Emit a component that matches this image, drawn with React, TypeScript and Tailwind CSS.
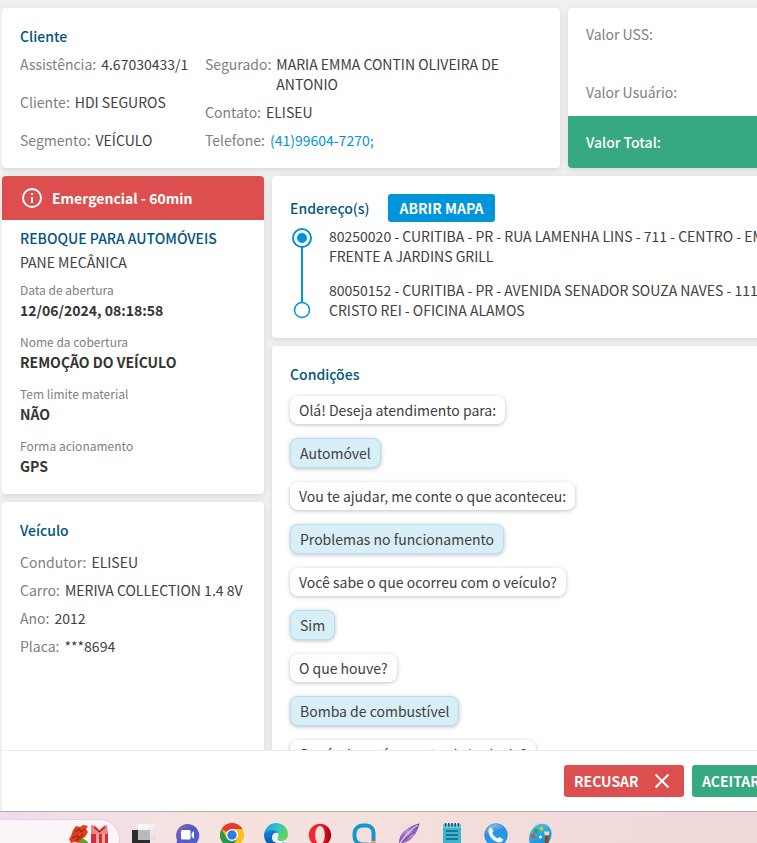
import type { ReactNode } from 'react';

const messages = [
  { text: 'Olá! Deseja atendimento para:', answer: false },
  { text: 'Automóvel', answer: true },
  { text: 'Vou te ajudar, me conte o que aconteceu:', answer: false },
  { text: 'Problemas no funcionamento', answer: true },
  { text: 'Você sabe o que ocorreu com o veículo?', answer: false },
  { text: 'Sim', answer: true },
  { text: 'O que houve?', answer: false },
  { text: 'Bomba de combustível', answer: true },
  { text: 'O veículo está em estrada/rodovia?', answer: false },
];

const serviceDetails = [
  { label: 'Data de abertura', value: '12/06/2024, 08:18:58' },
  { label: 'Nome da cobertura', value: 'REMOÇÃO DO VEÍCULO' },
  { label: 'Tem limite material', value: 'NÃO' },
  { label: 'Forma acionamento', value: 'GPS' },
];

const vehicle = [
  { label: 'Condutor:', value: 'ELISEU' },
  { label: 'Carro:', value: 'MERIVA COLLECTION 1.4 8V' },
  { label: 'Ano:', value: '2012' },
  { label: 'Placa:', value: '***8694' },
];

const Card = ({ className = '', children }: { className?: string; children: ReactNode }) => (
  <section className={`overflow-hidden rounded bg-white shadow-[0_2px_6px_rgba(0,0,0,0.1)] ${className}`}>{children}</section>
);

const Title = ({ children }: { children: ReactNode }) => (
  <h2 className="font-medium text-[#005580]">{children}</h2>
);

const Field = ({ label, children }: { label: string; children: ReactNode }) => (
  <div className="flex gap-[5px]">
    <span className="shrink-0 text-[#808080]">{label}</span>
    <span>{children}</span>
  </div>
);

/* Taskbar icons, all on a 24x24 grid */
const TaskView = () => (
  <svg className="size-6" viewBox="0 0 24 24">
    <defs>
      <linearGradient id="tv" x2="1" y2="1"><stop stopColor="#fff" /><stop offset="1" stopColor="#ddd" /></linearGradient>
    </defs>
    <path d="M0 7h18v17H0z" fill="#2b2d2c" />
    <path d="M6 1h18v16H6z" fill="url(#tv)" />
    <path d="M6 7h12v10H6z" fill="#b9bab9" />
  </svg>
);

const VideoChat = () => (
  <svg className="size-6" viewBox="0 0 24 24">
    <defs>
      <linearGradient id="vc" x2="1" y2="1"><stop stopColor="#7b6fc8" /><stop offset="0.45" stopColor="#5458c4" /><stop offset="1" stopColor="#4f63d8" /></linearGradient>
    </defs>
    <path d="M12 1a11.500 11.500 0 1 1-8 20l-4 3 1-7A11.500 11.500 0 0 1 12 1z" fill="url(#vc)" />
    <rect x="5" y="7" width="9.5" height="9.5" rx="1.3" fill="#fff" />
    <path d="M15.600 10.200 18 8v8l-2.400-2.400z" fill="#fff" />
  </svg>
);

const Chrome = () => (
  <svg className="size-6" viewBox="0 0 24 24">
    <circle cx="12" cy="12" r="12" fill="#fbc116" />
    <path d="M12 12 1.600 6A12 12 0 0 1 22.400 6z" fill="#e33b2e" />
    <path d="M1.600 6A12 12 0 0 0 12 24l5.200-9-10.400 0z" fill="#269a48" />
    <path d="M12 6h10.400L17.200 15z" fill="#fbc116" />
    <circle cx="12" cy="12" r="6" fill="#fff" />
    <circle cx="12" cy="12" r="4.7" fill="#2f7ded" />
  </svg>
);

const Edge = () => (
  <svg className="size-6" viewBox="0 0 24 24">
    <defs>
      <linearGradient id="eg" x2="1" y2="0.5"><stop stopColor="#1c9bdc" /><stop offset="0.5" stopColor="#2bc3cf" /><stop offset="1" stopColor="#62d65a" /></linearGradient>
      <linearGradient id="eb" x2="0" y2="1"><stop stopColor="#1585d6" /><stop offset="1" stopColor="#0a4fa0" /></linearGradient>
    </defs>
    <path d="M0 10C2 4 6 0 12 0c7 0 12 5 12 11 0 5-3 7-7 7-3 0-4-1-3-3 1-4-1-7-6-7C5 8 1 10 0 10z" fill="url(#eg)" />
    <path d="M0 11c2-3 5-4 8-4 3 0 5 1 6 3-4-1-6 1-6 5 0 4 5 7 13 3-2 4-6 6-10 6C5 24-.5 18 0 11z" fill="url(#eb)" />
    <path d="M14.500 10.500C11 9 8.500 11 8.500 14c0 4 4 7 9 6 2 0 4-1 5-2.500-3 1-5 1-7 .5-2-1-3-2-2-4 .5-1 1-2 1-3.500z" fill="#e9f1f8" />
  </svg>
);

const Opera = () => (
  <svg className="size-6" viewBox="0 0 24 24">
    <defs>
      <linearGradient id="op" x2="1"><stop stopColor="#ff2638" /><stop offset="0.55" stopColor="#e5202c" /><stop offset="1" stopColor="#a70014" /></linearGradient>
    </defs>
    <path fillRule="evenodd" d="M12 .8c6.300 0 11.200 5 11.200 11.300S18.300 23.400 12 23.400.8 18.400.8 12.100 5.700.8 12 .8zM12 3c-3 0-4.800 4-4.800 9.100s1.800 9.100 4.800 9.100 4.800-4 4.800-9.100S15 3 12 3z" fill="url(#op)" />
  </svg>
);

const LetterRing = () => (
  <svg className="size-6" viewBox="0 0 24 24">
    <path d="M21.500 18V9.500a7 7 0 0 0-7-7h-4a8 8 0 0 0-8 8v3a8 8 0 0 0 8 8h6" fill="none" stroke="#1397cf" strokeWidth="4" />
    <path d="M18.500 18.500H24V24h-5.500z" fill="#f58a3c" />
  </svg>
);

const Feather = () => (
  <svg className="size-6" viewBox="0 0 24 24">
    <defs>
      <linearGradient id="fe" x1="1" x2="0" y2="1"><stop stopColor="#5b2a94" /><stop offset="0.5" stopColor="#b48ed6" /><stop offset="1" stopColor="#7441a8" /></linearGradient>
    </defs>
    <path d="M23.500.5C16 2 8 7 5 12c-1.500 3-2 5-2 8 6 0 11-2 14-6 3-3 5-8 6.500-13.500z" fill="url(#fe)" />
    <path d="M22 2C15 6 9 12 2 23" fill="none" stroke="#e3d0f2" strokeWidth="1.2" />
    <path d="M19 9c-4 2-7 4-10 8" fill="none" stroke="#68369e" strokeWidth="1" />
  </svg>
);

const Notepad = () => (
  <svg className="size-6" viewBox="0 0 24 24">
    <path d="M3 1.500h18V24H3z" fill="#3db5d0" />
    <path d="M3 1.500h18V5H3z" fill="#63cbe0" />
    <path d="M5.500 0v3.500M8.750 0v3.500M12 0v3.500M15.250 0v3.500M18.500 0v3.500" stroke="#234d5d" strokeWidth="1.5" />
    <path d="M6 8h12M6 12h12M6 16h12" stroke="#155f7c" strokeWidth="1.5" />
  </svg>
);

const Phone = () => (
  <svg className="size-6" viewBox="0 0 24 24">
    <defs>
      <linearGradient id="ph" x2="0.3" y2="1"><stop stopColor="#a9dbf6" /><stop offset="0.45" stopColor="#2b8fe0" /><stop offset="1" stopColor="#1fa4ec" /></linearGradient>
    </defs>
    <circle cx="12" cy="12" r="11.3" fill="url(#ph)" stroke="#2a76bd" strokeWidth="0.7" />
    <path d="M7 4.500 9.500 8 8.300 10c.8 2.300 2.500 4.200 5.200 5.400l2.200-1.300 3.500 2.300c-.7 2.300-2.700 3.400-5 2.800C9 18 5 13.300 4.500 8.500 4.400 6.500 5.300 5 7 4.500z" fill="#fff" />
  </svg>
);

const Paint = () => (
  <svg className="size-6" viewBox="0 0 24 24">
    <defs>
      <linearGradient id="pa" x2="0.5" y2="1"><stop stopColor="#42cbf1" /><stop offset="1" stopColor="#118bd4" /></linearGradient>
    </defs>
    <path d="M14 .8c6 0 9.500 4.500 9.500 10C23.500 18 18 24 11 24c-5 0-10-2-10-8C1 8 7 .8 14 .8z" fill="url(#pa)" />
    <circle cx="5" cy="13" r="2.3" fill="#d65532" />
    <circle cx="8" cy="8" r="2.2" fill="#3c9b3f" />
    <circle cx="13.5" cy="5.8" r="2" fill="#f7b91a" />
    <circle cx="12.5" cy="14" r="1.6" fill="#eaf7fd" />
    <path d="M16 8.500h5.500l-.8 4h-3.900z" fill="#f5d9b2" />
    <path d="M17 12.500h3.500V24H17z" fill="#8a4b17" />
  </svg>
);

const Bouquet = () => (
  <svg className="h-6 w-10" viewBox="0 0 40 24">
    <path d="M10 15c4-1 6 0 9 3l2 6H11z" fill="#5aa42c" />
    <path d="M4 6 7 2l4 1 3-2 5 1-2 3 2 3-3 5-4 3-2 3-4-1-4 1-2-4 2-3z" fill="#d9431e" />
    <path d="m6 8 4-3 2 3 4-3M3 14l5-2 3 2 3-4M7 17l3-3" fill="none" stroke="#a12308" strokeWidth="1.2" />
    <path d="M22 8h17v16H22z" fill="#cf3138" />
    <path d="M27 8h3v16h-3zM33 8h3v16h-3z" fill="#f2a59a" />
    <path d="M22 1c4 0 7 2 8.500 5C32 3 35 1 38 1l1 9H22z" fill="#e98a80" />
    <path d="m25 3 5.500 5L36 3" fill="none" stroke="#8e1d28" strokeWidth="1.2" />
  </svg>
);

const taskbarIcons = [TaskView, VideoChat, Chrome, Edge, Opera, LetterRing, Feather, Notepad, Phone, Paint];

const App = () => {
  return (
    <div className="flex h-screen flex-col overflow-hidden bg-[#f0f0f0] font-['Noto_Sans_CJK_SC',sans-serif] text-sm leading-5 text-[#404040]">
      <div className="flex min-h-0 min-w-[820px] flex-1 flex-col pl-0.5">
        <main className="flex min-h-0 flex-1 flex-col gap-2 overflow-hidden pt-2 pr-2">
          <div className="grid shrink-0 grid-cols-[558px_minmax(0,1fr)] gap-2">
            <Card className="px-[18px] pt-[18px] pb-[18px]">
              <Title>Cliente</Title>
              <div className="mt-2 flex">
                <div className="flex w-[185px] shrink-0 flex-col justify-between">
                  <Field label="Assistência:">4.67030433/1</Field>
                  <Field label="Cliente:">HDI SEGUROS</Field>
                  <Field label="Segmento:">VEÍCULO</Field>
                </div>
                <div className="flex w-[320px] flex-col gap-2">
                  <Field label="Segurado:">MARIA EMMA CONTIN OLIVEIRA DE ANTONIO</Field>
                  <Field label="Contato:">ELISEU</Field>
                  <Field label="Telefone:">
                    <a href="tel:41996047270" className="text-[#0095da]">(41)99604-7270;</a>
                  </Field>
                </div>
              </div>
            </Card>

            <Card className="flex flex-col">
              <div className="flex flex-1 flex-col justify-between px-[18px] pt-4 pb-3.5 text-[#808080]">
                <p>Valor USS:</p>
                <p>Valor Usuário:</p>
              </div>
              <p className="bg-[#36a980] px-[18px] py-4 font-medium text-white">Valor Total:</p>
            </Card>
          </div>

          <div className="grid min-h-0 flex-1 grid-cols-[262px_minmax(0,1fr)] gap-2">
            <div className="flex flex-col gap-2">
              <Card className="shrink-0">
                <div className="flex h-11 items-center gap-2 bg-[#dc4f4e] px-[18px] font-bold text-white">
                  <svg className="size-6" viewBox="0 0 24 24" fill="none" stroke="#fff" strokeWidth="2">
                    <circle cx="12" cy="12" r="9" />
                    <path d="M12 7v2M12 11v6" />
                  </svg>
                  Emergencial - 60min
                </div>
                <div className="px-[18px] pt-2 pb-[18px]">
                  <Title>REBOQUE PARA AUTOMÓVEIS</Title>
                  <p className="mt-1">PANE MECÂNICA</p>
                  <dl className="mt-2 flex flex-col gap-3">
                    {serviceDetails.map((item) => (
                      <div key={item.label}>
                        <dt className="text-xs leading-5 text-[#808080]">{item.label}</dt>
                        <dd className="font-bold text-[#333333]">{item.value}</dd>
                      </div>
                    ))}
                  </dl>
                </div>
              </Card>

              <Card className="flex-1 rounded-b-none px-[18px] pt-[18px]">
                <Title>Veículo</Title>
                <div className="mt-3 flex flex-col gap-2">
                  {vehicle.map((item) => (
                    <Field key={item.label} label={item.label}>{item.value}</Field>
                  ))}
                </div>
              </Card>
            </div>

            <div className="flex min-h-0 flex-col gap-2">
              <Card className="shrink-0 px-[18px] py-[18px]">
                <div className="flex items-center gap-[18px]">
                  <Title>Endereço(s)</Title>
                  <button className="h-7 rounded-[3px] bg-[#0095da] px-3 font-bold text-white">ABRIR MAPA</button>
                </div>
                <div className="mt-1 flex gap-[15px]">
                  <svg className="h-[94px] w-6 shrink-0" viewBox="0 0 24 94" fill="none" stroke="#0095da" strokeWidth="2">
                    <path d="M12 21v55" />
                    <circle cx="12" cy="12" r="9" />
                    <circle cx="12" cy="12" r="5" fill="#0095da" stroke="none" />
                    <circle cx="12" cy="84" r="7.5" strokeWidth="1.5" />
                  </svg>
                  <div className="flex flex-col gap-3.5 whitespace-nowrap">
                    <p>80250020 - CURITIBA - PR - RUA LAMENHA LINS - 711 - CENTRO - EM<br />FRENTE A JARDINS GRILL</p>
                    <p>80050152 - CURITIBA - PR - AVENIDA SENADOR SOUZA NAVES - 1115 -<br />CRISTO REI - OFICINA ALAMOS</p>
                  </div>
                </div>
              </Card>

              <Card className="min-h-0 flex-1 rounded-b-none px-[18px] pt-[18px]">
                <Title>Condições</Title>
                <div className="mt-3 flex flex-col items-start gap-3.5">
                  {messages.map((msg) => (
                    <p
                      key={msg.text}
                      className={
                        msg.answer
                          ? 'rounded-lg border border-[#b0e0f4] bg-[#d9eff8] px-[9px] py-1 shadow-[0_1px_4px_rgba(0,0,0,0.25)]'
                          : 'rounded-lg bg-white px-[9px] py-1 shadow-[0_1px_4px_rgba(0,0,0,0.25)]'
                      }
                    >
                      {msg.text}
                    </p>
                  ))}
                </div>
              </Card>
            </div>
          </div>
        </main>

        <footer className="flex h-[61px] shrink-0 items-center justify-end gap-2 rounded-bl border-t border-[#eaeaea] bg-white pr-2 font-bold text-white">
          <button className="flex h-8 w-[120px] items-center justify-between rounded-[3px] bg-[#dc4f4e] px-2.5">
            RECUSAR
            <svg className="size-6" viewBox="0 0 24 24" fill="none" stroke="#fff" strokeWidth="2">
              <path d="m5.500 5.500 13 13M18.500 5.500l-13 13" />
            </svg>
          </button>
          <button className="flex h-8 w-[120px] items-center justify-between rounded-[3px] bg-[#36a980] px-2.5">
            ACEITAR
            <svg className="size-6" viewBox="0 0 24 24" fill="none" stroke="#fff" strokeWidth="2">
              <path d="m4 12 5 5L20 6" />
            </svg>
          </button>
        </footer>
      </div>

      {/* Desktop taskbar */}
      <div className="flex h-8 shrink-0 gap-3 overflow-hidden border-t border-[#b8abaa] bg-linear-to-r from-[#eedbef] via-[#f6e3df] via-25% to-[#efd8d8]">
        <div className="w-[120px] shrink-0 pt-[7px]">
          <div className="-ml-px flex h-10 justify-end rounded-r-full border border-[#e5cfd8] bg-[#fbf4f8] pt-1 pr-2.5">
            <Bouquet />
          </div>
        </div>
        <div className="flex gap-5 pt-[11px]">
          {taskbarIcons.map((Icon, index) => (
            <Icon key={index} />
          ))}
        </div>
      </div>
    </div>
  );
};

export default App;
